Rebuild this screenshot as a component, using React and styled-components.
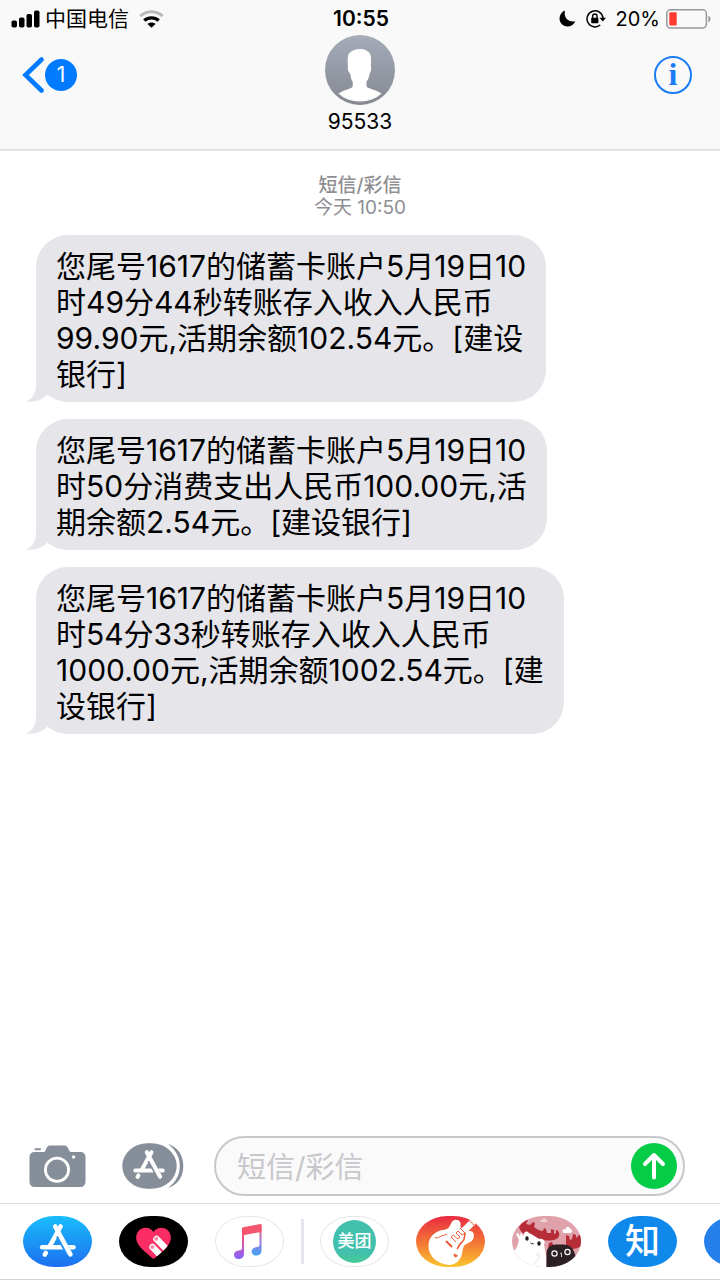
import React from "react";

import styled, { createGlobalStyle } from "styled-components";

const GlobalStyle = createGlobalStyle`
  * {
    box-sizing: border-box;
  }

  body {
    margin: 0;
    background: #fff;
    color: #000;
    font-family: Inter, "Noto Sans CJK SC", sans-serif;
  }

  button,
  input {
    font: inherit;
  }

  svg {
    display: block;
    flex-shrink: 0;
  }
`;

const Screen = styled.div`
  display: flex;
  flex-direction: column;
  min-height: 100vh;
  overflow: hidden;
`;

const Header = styled.header`
  background: #f9f9f9;
  border-bottom: 2px solid #e2e2e3;
`;

const StatusBar = styled.div`
  display: grid;
  grid-template-columns: 1fr auto 1fr;
  align-items: center;
  height: 35px;
  padding: 2px 9px 0 11px;
  font-size: 21px;
  line-height: 24px;
`;

const StatusGroup = styled.div`
  display: flex;
  align-items: center;
  justify-content: ${(props) => (props.$end ? "flex-end" : "flex-start")};
  gap: ${(props) => (props.$end ? "10px" : "5px")};
`;

const Carrier = styled.span`
  margin-right: 5px;
`;

const Clock = styled.time`
  font-weight: 600;
`;

const BatteryLevel = styled.span`
  display: flex;
  align-items: center;
  gap: 6px;
  font-size: 20px;
`;

const Nav = styled.nav`
  display: grid;
  grid-template-columns: 1fr auto 1fr;
  align-items: start;
  padding: 0 22px 10px;
`;

const IconButton = styled.button`
  display: flex;
  align-items: center;
  padding: 0;
  border: 0;
  background: none;
  cursor: pointer;
`;

const BackButton = styled(IconButton)`
  justify-self: start;
  height: 80px;
  gap: 1px;
`;

const Badge = styled.span`
  width: 32px;
  height: 32px;
  border-radius: 50%;
  background: #007aff;
  color: #fff;
  font-size: 21px;
  line-height: 32px;
  text-align: center;
`;

const InfoButton = styled(IconButton)`
  justify-self: end;
  height: 80px;
  margin-right: 6px;
`;

const InfoRing = styled.span`
  width: 38px;
  height: 38px;
  border: 2px solid #1a7cf5;
  border-radius: 50%;
  color: #1a7cf5;
  font-family: "Liberation Serif", serif;
  font-size: 32px;
  font-weight: 700;
  line-height: 33px;
  text-align: center;
`;

const Contact = styled.div`
  display: flex;
  flex-direction: column;
  align-items: center;
`;

const ContactName = styled.h1`
  margin: 0;
  font-size: 21px;
  font-weight: 400;
  line-height: 34px;
`;

const Thread = styled.main`
  flex: 1;
  padding: 24px 36px;
`;

const Stamp = styled.p`
  margin: 0 0 16px;
  color: #8e8e93;
  font-size: 19px;
  line-height: 22px;
  text-align: center;
`;

const StampKind = styled.span`
  display: block;
  font-weight: 500;
`;

const Messages = styled.ul`
  display: flex;
  flex-direction: column;
  align-items: flex-start;
  gap: 17px;
  margin: 0;
  padding: 0;
  list-style: none;
`;

const Bubble = styled.li`
  position: relative;
  padding: 13px 20px 10px;
  border-radius: 32px;
  background: #e5e5ea;
  font-size: 30px;
  line-height: 36px;
  white-space: pre-line;
`;

const Tail = styled.svg`
  position: absolute;
  left: -10px;
  bottom: 0;
`;

const Composer = styled.form`
  display: flex;
  align-items: center;
  padding: 0 35px 7px 29px;
`;

const CameraButton = styled(IconButton)`
  margin-right: 36px;
`;

const AppsButton = styled(IconButton)`
  margin-right: 30px;
`;

const Field = styled.div`
  display: flex;
  flex: 1;
  align-items: center;
  min-width: 0;
  height: 60px;
  padding: 0 6px 0 21px;
  border: 2px solid #c7c7cc;
  border-radius: 30px;
  background: #fafafa;
`;

const MessageInput = styled.input`
  flex: 1;
  min-width: 0;
  padding: 3px 0 0;
  border: 0;
  outline: 0;
  background: none;
  font-size: 29px;
  line-height: 36px;

  &::placeholder {
    color: #c7c7cc;
    opacity: 1;
  }
`;

const SendButton = styled(IconButton)`
  justify-content: center;
  width: 46px;
  height: 46px;
  border-radius: 50%;
  background: #04cc47;
`;

const AppStrip = styled.div`
  display: flex;
  gap: 27px;
  padding: 12px 0 12px 23px;
  overflow: hidden;
  border-top: 1px solid #dcdcde;
  border-bottom: 1px solid #d4d4d6;
`;

const AppPill = styled.button`
  display: flex;
  flex: none;
  align-items: center;
  justify-content: center;
  width: 69px;
  height: 51px;
  padding: 0;
  overflow: hidden;
  border: 0;
  border-radius: 32px / 26px;
  background: ${(props) => props.$background || "#fff"};
  box-shadow: ${(props) => (props.$outlined ? "inset 0 0 0 1px #e6e6e8" : "none")};
  color: #fff;
  font-size: 35px;
  font-weight: 500;
  line-height: 51px;
  cursor: pointer;
`;

const Separator = styled.span`
  flex: none;
  align-self: center;
  width: 3px;
  height: 45px;
  margin: 0 -11px 0 -10px;
  background: #e5e5ee;
`;

const MeituanDisc = styled.span`
  width: 43px;
  height: 43px;
  border-radius: 50%;
  background: linear-gradient(#43bfae 75%, #46cc94);
  font-size: 17px;
  line-height: 43px;
`;

const messages = [
  "您尾号1617的储蓄卡账户5月19日10\n时49分44秒转账存入收入人民币\n99.90元,活期余额102.54元。[建设\n银行]",
  "您尾号1617的储蓄卡账户5月19日10\n时50分消费支出人民币100.00元,活\n期余额2.54元。[建设银行]",
  "您尾号1617的储蓄卡账户5月19日10\n时54分33秒转账存入收入人民币\n1000.00元,活期余额1002.54元。[建\n设银行]",
];

const SignalIcon = () => (
  <svg width="29" height="18" viewBox="0 0 29 18">
    <rect x="0.5" y="10.5" width="5.5" height="7" rx="1.8" />
    <rect x="8" y="7.5" width="5.5" height="10" rx="1.8" />
    <rect x="15.5" y="4" width="5.5" height="13.5" rx="1.8" />
    <rect x="23" y="0.5" width="5.5" height="17" rx="1.8" />
  </svg>
);

const WifiIcon = () => (
  <svg width="25" height="18" viewBox="0 0 25 18" fill="none" strokeWidth="3">
    <path d="M1.3 6.2C7.6 0.3 17.4 0.3 23.7 6.2" stroke="#b9b9b9" />
    <path d="M5.3 10.6C9.4 6.9 15.6 6.9 19.7 10.6" stroke="#000" strokeWidth="3.4" />
    <path d="M12.5 17.8L8.5 14C10.9 12 14.1 12 16.5 14Z" fill="#000" />
  </svg>
);

const MoonIcon = () => (
  <svg width="17" height="17" viewBox="0 0 17 17">
    <path d="M6 0.5C4.4 7 8.8 12.7 16.4 11.2C14.5 15 11.3 16.6 8.4 16.5C3.8 16.4 0.5 12.9 0.5 8.6C0.5 4.8 2.6 1.9 6 0.5Z" />
  </svg>
);

const RotationLockIcon = () => (
  <svg width="20" height="18" viewBox="0 0 20 18">
    <path d="M14.2 15A8 8 0 1 1 17 8" fill="none" stroke="#000" strokeWidth="1.5" />
    <path d="M13.5 7.8H20L16.8 11.6Z" />
    <rect x="5.2" y="7.7" width="7.2" height="5.6" rx="0.8" />
    <path d="M6.6 8V6.2A2.2 2.2 0 0 1 11 6.2V8" fill="none" stroke="#000" strokeWidth="1.4" />
  </svg>
);

const BatteryIcon = () => (
  <svg width="45" height="20" viewBox="0 0 45 20">
    <rect x="0.8" y="0.8" width="39.6" height="18.2" rx="3.8" fill="none" stroke="#98989a" strokeWidth="1.5" />
    <rect x="3.3" y="3.3" width="7.4" height="13.2" rx="1.2" fill="#fe3b30" />
    <path d="M42.3 6.8C45.2 7.6 45.2 12.2 42.3 13Z" fill="#98989a" />
  </svg>
);

const BackIcon = () => (
  <svg width="22" height="38" viewBox="0 0 22 38" fill="none">
    <path d="M19.5 3.5L3.5 19L19.5 34.5" stroke="#007aff" strokeWidth="4.6" strokeLinecap="round" />
  </svg>
);

const AvatarIcon = () => (
  <svg width="70" height="70" viewBox="0 0 70 70">
    <defs>
      <linearGradient id="avatar" x1="0" y1="0" x2="0" y2="1">
        <stop offset="0" stopColor="#a6abba" />
        <stop offset="1" stopColor="#858891" />
      </linearGradient>
    </defs>
    <circle cx="35" cy="35" r="35" fill="url(#avatar)" />
    <path
      d="M35 14C40 14 42.6 16 45 18.5C46.6 22 45.8 27 45.9 31.5C46.6 32.4 46.1 36 44.8 38.4C44.1 42 43 44.8 41.6 46.2C41.2 48.8 41.3 51 42.2 52.3C45.5 54.3 52 55.2 56.5 58.6C51 63.8 43.5 66.6 35 66.6C26.5 66.6 19 63.8 13.5 58.6C18 55.2 24.5 54.3 27.2 52.3C28 51 27.9 48.8 27.5 46.2C26.2 44.8 25.8 42 25.2 38.4C22.9 37 22.4 32.9 23 31.5C22.7 27 22.2 22.5 23.6 19C26.4 15.5 30.5 14 35 14Z"
      fill="#fff"
    />
  </svg>
);

const AppStoreGlyph = ({ gap }) => (
  <g fill="none" strokeLinecap="round" strokeWidth="4.6">
    <path d="M19.2 31.3H50.4" stroke="#fff" />
    <path d="M37.6 10.5L26.6 30.5M22.8 36.9L21.8 38.6" stroke="#fff" />
    <path d="M36 19.5L46 37.5" stroke={gap} strokeWidth="6.6" strokeLinecap="butt" />
    <path d="M32.2 10.5L47.4 38.4" stroke="#fff" />
  </g>
);

const CameraIcon = () => (
  <svg width="57" height="43" viewBox="0 0 57 43">
    <path
      d="M6 7H15C17 7 17 0.5 21 0.5H35.5C39.5 0.5 39.5 7 42 7H51C54.5 7 56.5 9 56.5 12.5V36.5C56.5 40 54.5 42 51 42H6C2.5 42 0.5 40 0.5 36.5V12.5C0.5 9 2.5 7 6 7Z"
      fill="#868e99"
    />
    <rect x="5.5" y="3.3" width="6.5" height="1.9" rx="0.9" fill="#868e99" />
    <circle cx="28" cy="24.8" r="11.6" fill="none" stroke="#fff" strokeWidth="2.8" />
    <circle cx="44.6" cy="12" r="1.7" fill="#fff" />
  </svg>
);

const AppsIcon = () => (
  <svg width="62" height="46" viewBox="0 0 62 46">
    <rect x="0.3" y="0.3" width="54.4" height="45.4" rx="25" ry="22.7" fill="#868e99" />
    <path d="M46 1C56.5 4.5 61.3 13 61.3 23C61.3 33 56.5 41.5 46 45C53.5 39.5 57.8 32 57.8 23C57.8 14 53.5 6.5 46 1Z" fill="#868e99" />
    <g transform="translate(-3.6 0) scale(0.88)">
      <AppStoreGlyph gap="#868e99" />
    </g>
  </svg>
);

const SendIcon = () => (
  <svg width="24" height="28" viewBox="0 0 24 28" fill="none" stroke="#fff" strokeWidth="4" strokeLinecap="round" strokeLinejoin="round">
    <path d="M12 25.5V3M3 12L12 3L21 12" />
  </svg>
);

const StoreArt = () => (
  <svg width="69" height="51" viewBox="0 0 69 51">
    <AppStoreGlyph gap="#1d91f6" />
  </svg>
);

const HeartArt = () => (
  <svg width="69" height="51" viewBox="0 0 69 51">
    <defs>
      <clipPath id="heart">
        <path d="M34.5 16C38 11 45 10.5 49 14.5C53 18.5 52.5 25 49 29.5C45.5 34 40 38.5 34.5 43C29 38.5 23.5 34 20 29.5C16.5 25 16 18.5 20 14.5C24 10.5 31 11 34.5 16Z" />
      </clipPath>
    </defs>
    <g clipPath="url(#heart)">
      <rect width="69" height="51" fill="#fc2d65" />
      <path d="M37.5 23L52 38M33.5 31L47 45" stroke="#fff" strokeWidth="6.5" strokeLinecap="round" />
      <path d="M37 28.5L50 42" stroke="#fc2d65" strokeWidth="1.4" />
    </g>
    <circle cx="37.3" cy="22.8" r="2" fill="#fb8caa" />
    <circle cx="33.4" cy="31" r="2" fill="#fb8caa" />
  </svg>
);

const MusicArt = () => (
  <svg width="69" height="51" viewBox="0 0 69 51">
    <defs>
      <linearGradient id="noteLeft" x1="0" y1="0" x2="0" y2="1">
        <stop offset="0.2" stopColor="#f4566f" />
        <stop offset="0.6" stopColor="#c45ac0" />
        <stop offset="1" stopColor="#8064fb" />
      </linearGradient>
      <linearGradient id="noteRight" x1="0" y1="0" x2="0" y2="1">
        <stop offset="0.1" stopColor="#f4566f" />
        <stop offset="0.55" stopColor="#9a7be0" />
        <stop offset="1" stopColor="#3fa4f7" />
      </linearGradient>
    </defs>
    <path d="M27 12H29V38C29 41.5 26.5 43 23.5 43C20.8 43 19 41.2 19 38.9C19 35.8 21.5 34.6 25 34.2C26.5 34 27 33.5 27 32Z" fill="url(#noteLeft)" />
    <path d="M44.5 9H46.5V34.5C46.5 38 44 39.6 41 39.6C38.3 39.6 36.6 37.9 36.6 35.6C36.6 32.5 39 31.3 42.5 30.9C44 30.7 44.5 30 44.5 28.5Z" fill="url(#noteRight)" />
    <path d="M27 12.5C27 11.8 27.4 11.4 28.2 11.2L45.3 8C46.2 7.9 46.5 8.2 46.5 9V15.8L27 19.5Z" fill="#f4566f" />
  </svg>
);

const GuitarArt = () => (
  <svg width="69" height="51" viewBox="0 0 69 51">
    <path
      d="M12.5 30C12.5 21 19 15 27 14C32 13.5 33.5 11 35 7.5C36.5 3 42 2.5 44 6C45.5 9 43 11 46 12L56 2L61.5 6L52 15.5C56 14 59 17 57.5 22C56 27 50 27 48 30C46 33 47 37 45 41C42 47 37 49 33 49C21 48 12.5 40 12.5 30Z"
      fill="#fff"
    />
    <g fill="none" stroke="#ee5a35" strokeWidth="1">
      <path d="M19 21.5C22 23 25 19 31 18.5" />
      <path d="M44 12L49 17L46 19L42 15L40 17L44 21L41.5 23L37.5 19L35 21L40 26" />
      <path d="M49.5 17C47.5 20 50 23 46 26C43 28 43 31 41 33" strokeWidth="1.6" />
      <path d="M30 25L36 31M39 38C38 40 40 41 41 39" strokeWidth="2" />
      <path d="M53.5 5L58.5 9.5" />
    </g>
  </svg>
);

const StickerArt = () => (
  <svg width="69" height="51" viewBox="0 0 69 51">
    <rect width="69" height="51" fill="#dfa1aa" />
    <path d="M28 5.5C28 3.5 30 3.5 30.5 4.5C30.5 1.5 34 1.5 34 4C36 4 35.5 6 34.5 6H29Z" fill="#efd0d4" />
    <path d="M51 16.5C49.5 14 52 12.5 53.5 13.5C53.5 10 58 10 58 13C61 13 60.5 16.8 58.5 17H52Z" fill="#fff" />
    <path
      d="M7 11L13 3L16 4L14 8L18 9L21 6L23 7L22 11C26 14 29 15 31 15L32 12L34 13L35 17L39 17V13L42 14V18L44 17V14C46 14 48 17 47 20C45 25 37 25 31 24L13 19C9 16 8 14 7 11Z"
      fill="#b62d38"
    />
    <path d="M54 28L54 19L57 20L58 24L60 23L61 18L64 19V22L69 17V30C65 33 60 34 56 32Z" fill="#b62d38" />
    <path d="M36 32L37 27L40 26L42 31Z" fill="#b62d38" />
    <path
      d="M0 51L2 35C5 33 6 27 7 24L4 18L6 17L8 20L9 16L11 20C12 16 14 14 17 17C21 19 24 21 27 23C31 22 34 25 32 29C34 37 35 45 34 51Z"
      fill="#fff"
    />
    <path d="M24 40C25 36 28 36 27 41C26 45 25 46 22 47" fill="none" stroke="#ddd2d4" strokeWidth="0.8" />
    <ellipse cx="15" cy="22.5" rx="1.7" ry="2.2" fill="#211b1d" />
    <ellipse cx="27" cy="27.5" rx="1.7" ry="2.2" fill="#211b1d" />
    <path d="M18.5 26.5C19 28 20 28 20.3 27C20.5 28.5 21.5 28.5 22 27.5" fill="none" stroke="#211b1d" strokeWidth="0.8" />
    <path d="M34.5 51V37C35 31.5 39 28.5 44 28.5H52C61 28.5 65 38 64 51Z" fill="#2b2023" />
    <g fill="none" stroke="#fff" strokeWidth="1.2">
      <circle cx="42.5" cy="37.5" r="2.6" />
      <circle cx="55.5" cy="36" r="2.6" />
      <path d="M48 37.5L50 37M49.5 38V41" strokeWidth="0.8" />
    </g>
  </svg>
);

const App = () => {
  return (
    <Screen>
      <GlobalStyle />
      <Header>
        <StatusBar>
          <StatusGroup>
            <SignalIcon />
            <Carrier>中国电信</Carrier>
            <WifiIcon />
          </StatusGroup>
          <Clock>10:55</Clock>
          <StatusGroup $end>
            <MoonIcon />
            <RotationLockIcon />
            <BatteryLevel>
              20%
              <BatteryIcon />
            </BatteryLevel>
          </StatusGroup>
        </StatusBar>
        <Nav>
          <BackButton type="button" aria-label="返回">
            <BackIcon />
            <Badge>1</Badge>
          </BackButton>
          <Contact>
            <AvatarIcon />
            <ContactName>95533</ContactName>
          </Contact>
          <InfoButton type="button" aria-label="详细信息">
            <InfoRing>i</InfoRing>
          </InfoButton>
        </Nav>
      </Header>

      <Thread>
        <Stamp>
          <StampKind>短信/彩信</StampKind>
          今天 10:50
        </Stamp>
        <Messages>
          {messages.map((message) => (
            <Bubble key={message}>
              {message}
              <Tail width="24" height="36" viewBox="0 0 24 36">
                <path d="M10 0V19C10 27 6 33.5 0 35.5C8 36.5 16 34 21 29L24 0Z" fill="#e5e5ea" />
              </Tail>
            </Bubble>
          ))}
        </Messages>
      </Thread>

      <Composer onSubmit={(e) => e.preventDefault()}>
        <CameraButton type="button" aria-label="相机">
          <CameraIcon />
        </CameraButton>
        <AppsButton type="button" aria-label="应用">
          <AppsIcon />
        </AppsButton>
        <Field>
          <MessageInput type="text" placeholder="短信/彩信" aria-label="短信/彩信" />
          <SendButton type="submit" aria-label="发送">
            <SendIcon />
          </SendButton>
        </Field>
      </Composer>

      <AppStrip>
        <AppPill type="button" aria-label="App Store" $background="linear-gradient(#18bdfb, #1d6ff0)">
          <StoreArt />
        </AppPill>
        <AppPill type="button" aria-label="Digital Touch" $background="#000">
          <HeartArt />
        </AppPill>
        <AppPill type="button" aria-label="音乐" $outlined>
          <MusicArt />
        </AppPill>
        <Separator />
        <AppPill type="button" $outlined>
          <MeituanDisc>美团</MeituanDisc>
        </AppPill>
        <AppPill type="button" aria-label="库乐队" $background="linear-gradient(#e92b42, #f47a35 55%, #fac52c)">
          <GuitarArt />
        </AppPill>
        <AppPill type="button" aria-label="贴纸">
          <StickerArt />
        </AppPill>
        <AppPill type="button" $background="#0f88eb">
          知
        </AppPill>
        <AppPill type="button" aria-label="更多" $background="#2680eb" />
      </AppStrip>
    </Screen>
  );
};

export default App;
